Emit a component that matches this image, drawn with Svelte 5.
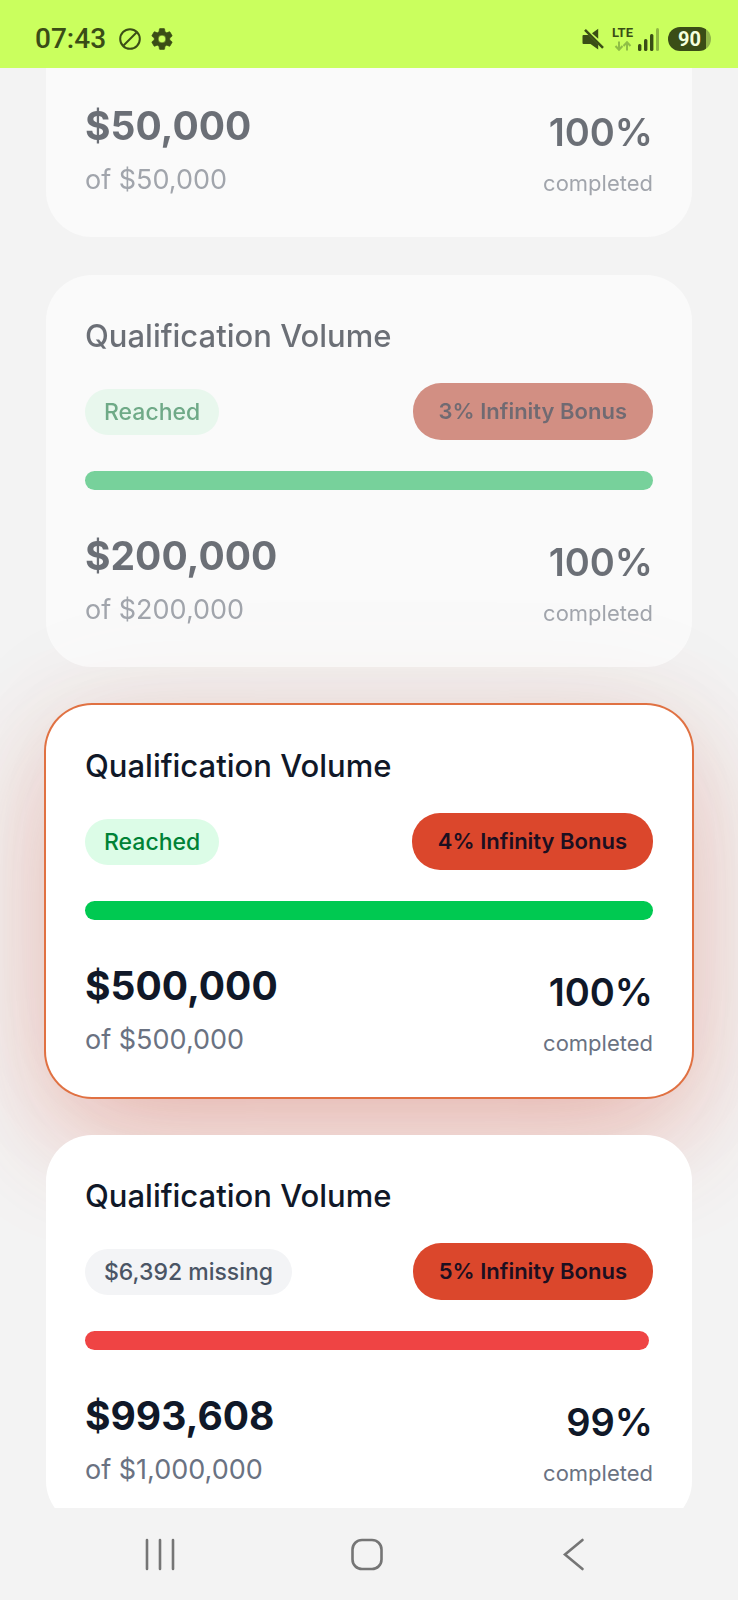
<script lang="ts">
	type Tier = {
		goal: string;
		volume: string;
		percent: number;
		fill: number;
		status?: string;
		bonus?: string;
		reached: boolean;
		faded?: boolean;
		active?: boolean;
	};

	const tiers: Tier[] = [
		{ goal: '$50,000', volume: '$50,000', percent: 100, fill: 100, reached: true, faded: true },
		{
			goal: '$200,000',
			volume: '$200,000',
			percent: 100,
			fill: 100,
			status: 'Reached',
			bonus: '3% Infinity Bonus',
			reached: true,
			faded: true
		},
		{
			goal: '$500,000',
			volume: '$500,000',
			percent: 100,
			fill: 100,
			status: 'Reached',
			bonus: '4% Infinity Bonus',
			reached: true,
			active: true
		},
		{
			goal: '$1,000,000',
			volume: '$993,608',
			percent: 99,
			fill: 99.36,
			status: '$6,392 missing',
			bonus: '5% Infinity Bonus',
			reached: false
		}
	];
</script>

<div class="screen">
	<header class="status-bar">
		<div class="status-left">
			<time>07:43</time>
			<svg width="22" height="22" viewBox="0 0 22 22" aria-hidden="true">
				<g fill="none" stroke="currentColor" stroke-width="2">
					<circle cx="11" cy="11" r="9.8" />
					<path d="M4.5 17.5 17.5 4.5" />
				</g>
			</svg>
			<svg class="gear" width="26" height="26" viewBox="0 0 24 24" aria-hidden="true">
				<path
					fill="currentColor"
					stroke="currentColor"
					stroke-width="0.6"
					d="M19.14 12.94c.04-.3.06-.61.06-.94 0-.32-.02-.64-.07-.94l2.03-1.58a.49.49 0 0 0 .12-.61l-1.92-3.32a.49.49 0 0 0-.59-.22l-2.39.96a7 7 0 0 0-1.62-.94l-.36-2.54a.48.48 0 0 0-.48-.41h-3.84a.47.47 0 0 0-.47.41l-.36 2.54c-.59.24-1.13.57-1.62.94l-2.39-.96a.48.48 0 0 0-.59.22L2.74 8.87a.47.47 0 0 0 .12.61l2.03 1.58c-.05.3-.09.63-.09.94s.02.64.07.94l-2.03 1.58a.49.49 0 0 0-.12.61l1.92 3.32c.12.22.37.29.59.22l2.39-.96c.5.38 1.03.7 1.62.94l.36 2.54c.05.24.24.41.48.41h3.84c.24 0 .44-.17.47-.41l.36-2.54a6.9 6.9 0 0 0 1.62-.94l2.39.96c.22.08.47 0 .59-.22l1.92-3.32a.47.47 0 0 0-.12-.61zM12 15.6a3.6 3.6 0 1 1 0-7.2 3.6 3.6 0 0 1 0 7.2"
				/>
			</svg>
		</div>
		<div class="status-right">
			<svg width="22" height="22" viewBox="0 0 22 22" aria-hidden="true">
				<path
					fill="currentColor"
					d="M10 5.2 16.2 0.8V10.8ZM1.5 7H6.5L16.2 16.6V21.5L8.5 16H1.5a1 1 0 0 1-1-1V8a1 1 0 0 1 1-1Z"
				/>
				<path d="M3 1.8 21 19.8" stroke="currentColor" stroke-width="2.4" />
			</svg>
			<div class="network">
				<span>LTE</span>
				<svg width="18" height="10" viewBox="0 0 18 10" aria-hidden="true">
					<path
						d="M5 0.5V8.5M1.5 5 5 8.8 8.5 5M13 9.5V1.5M9.5 5 13 1.2 16.5 5"
						fill="none"
						stroke="currentColor"
						stroke-width="2"
					/>
				</svg>
			</div>
			<svg class="signal" width="22" height="23" viewBox="0 0 22 23" aria-hidden="true">
				<g fill="currentColor">
					<rect x="0" y="16" width="3.4" height="7" rx="1.5" />
					<rect x="6" y="11" width="3.4" height="12" rx="1.5" />
					<rect x="12" y="6" width="3.4" height="17" rx="1.5" />
					<rect x="18" y="0" width="3" height="23" rx="1.5" opacity="0.4" />
				</g>
			</svg>
			<span class="battery">90</span>
		</div>
	</header>

	<main class="tiers">
		{#each tiers as tier (tier.goal)}
			<section class="card" class:faded={tier.faded} class:active={tier.active} class:cut={!tier.bonus}>
				{#if tier.bonus}
					<h2>Qualification Volume</h2>
					<div class="badges">
						<span class="status" class:reached={tier.reached}>{tier.status}</span>
						<span class="bonus">{tier.bonus}</span>
					</div>
					<div
						class="track"
						role="progressbar"
						aria-label="Qualification Volume"
						aria-valuenow={tier.percent}
						aria-valuemin="0"
						aria-valuemax="100"
					>
						<div class="fill" class:reached={tier.reached} style="width: {tier.fill}%"></div>
					</div>
				{/if}
				<div class="figures">
					<div class="figure">
						<strong class="volume">{tier.volume}</strong>
						<span class="goal">of {tier.goal}</span>
					</div>
					<div class="figure right">
						<strong>{tier.percent}%</strong>
						<span class="note">completed</span>
					</div>
				</div>
			</section>
		{/each}
	</main>

	<nav class="nav-bar">
		<button type="button" aria-label="Recent apps">
			<svg width="32" height="34" viewBox="0 0 32 34">
				<path d="M3 3v29M16 3v29M29 3v29" />
			</svg>
		</button>
		<button type="button" aria-label="Home">
			<svg width="32" height="34" viewBox="0 0 32 34">
				<rect x="1.5" y="3" width="29" height="29" rx="9.5" />
			</svg>
		</button>
		<button type="button" aria-label="Back">
			<svg width="32" height="34" viewBox="0 0 32 34">
				<path d="M24.5 3 7 17.5 24.5 32" />
			</svg>
		</button>
	</nav>
</div>

<style>
	:global(body) {
		margin: 0;
		background: #f3f3f3;
	}
	.screen {
		display: flex;
		flex-direction: column;
		height: 100vh;
		background: #f3f3f3;
		color: #101828;
		font-family: Inter, 'Liberation Sans', sans-serif;
	}

	.status-bar {
		display: flex;
		flex-shrink: 0;
		align-items: center;
		justify-content: space-between;
		box-sizing: border-box;
		height: 68px;
		padding: 10px 27px 0 35px;
		background: #caff5e;
		color: #3a4d16;
	}
	.status-left,
	.status-right {
		display: flex;
		align-items: center;
	}
	.status-left {
		gap: 13px;
	}
	.status-left time {
		font-family: Roboto, sans-serif;
		font-size: 28px;
		font-weight: 500;
		line-height: 32px;
	}
	.gear {
		margin-left: -5px;
	}
	.status-right {
		gap: 8px;
	}
	.network {
		display: flex;
		flex-direction: column;
		align-items: center;
		gap: 2px;
		font-family: Roboto, sans-serif;
		font-size: 13px;
		font-weight: 700;
		line-height: 12px;
	}
	.network svg {
		color: #8fbe45;
	}
	.signal {
		margin-left: -3px;
	}
	.battery {
		box-sizing: border-box;
		width: 43px;
		border-radius: 12px;
		background: linear-gradient(to right, #3a4d16 38px, #8fb548 38px);
		color: #f4ffdd;
		font-family: Roboto, sans-serif;
		font-size: 20px;
		font-weight: 700;
		line-height: 24px;
		text-align: center;
	}

	.tiers {
		display: flex;
		flex: 1;
		flex-direction: column;
		gap: 38px;
		min-height: 0;
		padding: 0 46px;
		overflow: hidden;
	}
	.card {
		flex-shrink: 0;
		padding: 38px 39px;
		border-radius: 46px;
		background: #fff;
	}
	.card.faded {
		filter: grayscale(25%);
		opacity: 0.6;
	}
	.card.active {
		box-shadow:
			0 0 0 2px #e07142,
			0 0 128px rgba(140, 60, 40, 0.08),
			0 44px 116px -6px rgba(224, 60, 40, 0.31);
	}
	/* first card is scrolled partly out of view */
	.card.cut {
		padding-top: 35px;
		border-radius: 0 0 46px 46px;
	}
	h2 {
		margin: 0 0 24px;
		font-size: 31px;
		font-weight: 500;
		line-height: 46px;
	}
	.badges {
		display: flex;
		align-items: center;
		justify-content: space-between;
		margin-bottom: 31px;
	}
	.status {
		padding: 0 19px;
		border-radius: 23px;
		background: #f3f4f6;
		color: #4a5565;
		font-size: 23px;
		font-weight: 500;
		line-height: 46px;
	}
	.status.reached {
		background: #dcfce7;
		color: #008236;
	}
	.bonus {
		padding: 0 26px;
		border-radius: 28px;
		background: #db472c;
		color: #1c0f20;
		font-size: 22px;
		font-weight: 600;
		line-height: 57px;
	}
	.track {
		height: 19px;
		margin-bottom: 43px;
	}
	.fill {
		height: 100%;
		border-radius: 10px;
		background: #ef4444;
	}
	.fill.reached {
		background: #00c951;
	}
	.figures {
		display: flex;
		align-items: flex-end;
		justify-content: space-between;
	}
	.figure {
		display: flex;
		flex-direction: column;
		gap: 12px;
	}
	.figure.right {
		text-align: right;
	}
	.figure strong {
		font-size: 38px;
		font-weight: 600;
		line-height: 46px;
	}
	.figure .volume {
		font-size: 39px;
		font-weight: 700;
	}
	.goal {
		color: #6a7282;
		font-size: 27px;
		line-height: 38px;
	}
	.note {
		color: #6a7282;
		font-size: 22px;
		line-height: 32px;
	}

	.nav-bar {
		display: grid;
		flex-shrink: 0;
		grid-template-columns: repeat(3, 1fr);
		align-items: center;
		height: 92px;
		padding: 0 60px 0 56px;
	}
	.nav-bar button {
		display: flex;
		justify-content: center;
		padding: 12px 0;
		border: 0;
		background: none;
		color: #757575;
		cursor: pointer;
	}
	.nav-bar svg {
		fill: none;
		stroke: currentColor;
		stroke-width: 2.6;
		stroke-linecap: round;
	}
</style>
